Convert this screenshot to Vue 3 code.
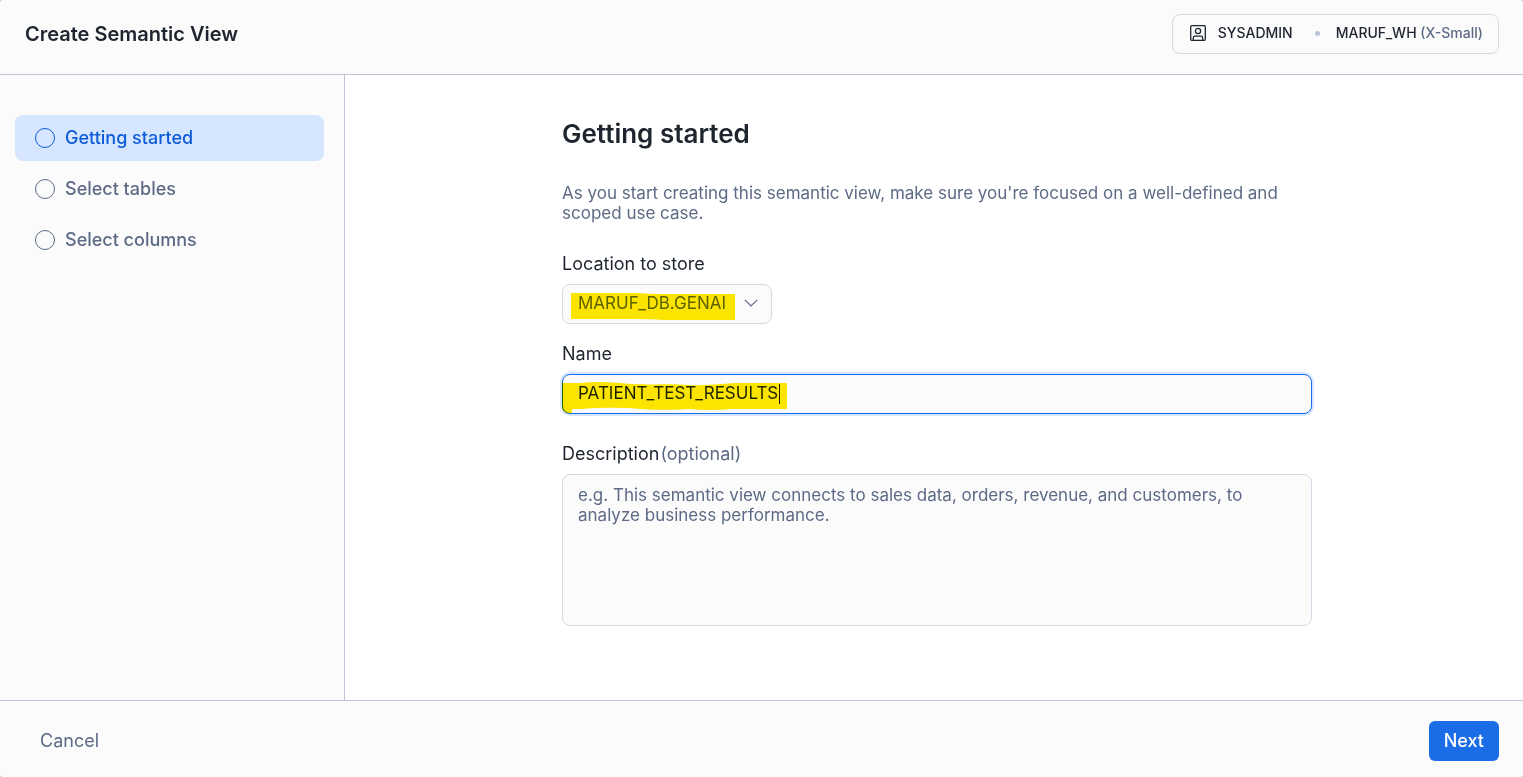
<script setup>
import { nextTick, onMounted, ref, watch } from 'vue'

const steps = ['Getting started', 'Select tables', 'Select columns']
const active = ref(0)
const location = ref('MARUF_DB.GENAI')
const name = ref('PATIENT_TEST_RESULTS')
const description = ref('')
const nameInput = ref(null)
const caretLeft = ref(0)

// Places the steady caret right after the typed text.
function placeCaret() {
  const style = getComputedStyle(nameInput.value)
  const ctx = document.createElement('canvas').getContext('2d')
  ctx.font = `${style.fontWeight} ${style.fontSize} ${style.fontFamily}`
  caretLeft.value = 16 + Math.ceil(ctx.measureText(name.value).width)
}

onMounted(() => {
  const el = nameInput.value
  el.focus()
  el.setSelectionRange(name.value.length, name.value.length)
  placeCaret()
})
watch(name, () => nextTick(placeCaret))
</script>

<template>
  <div class="dialog">
    <header class="header">
      <h1>Create Semantic View</h1>
      <button type="button" class="context">
        <svg class="role-icon" viewBox="0 0 16 16" fill="none" stroke="currentColor" stroke-width="1.3">
          <rect x="0.7" y="0.7" width="14.600" height="14.600" rx="1" />
          <circle cx="8" cy="6" r="2.600" />
          <path d="M3.300 15.200v-2.200a1.800 1.800 0 0 1 1.800-1.800h5.800a1.800 1.800 0 0 1 1.800 1.800v2.200" />
        </svg>
        <span>SYSADMIN</span>
        <span class="dot"></span>
        <span>MARUF_WH <span class="muted">(X-Small)</span></span>
      </button>
    </header>

    <div class="body">
      <nav class="steps">
        <button
          v-for="(step, i) in steps"
          :key="step"
          type="button"
          class="step"
          :class="{ active: i === active }"
          @click="active = i"
        >
          <span class="ring"></span>{{ step }}
        </button>
      </nav>

      <main class="main">
        <form class="form" @submit.prevent>
          <h2>Getting started</h2>
          <p class="intro">
            As you start creating this semantic view, make sure you're focused on a well-defined and scoped use case.
          </p>

          <label for="location">Location to store</label>
          <div class="field select-field">
            <select id="location" v-model="location" class="control">
              <option>MARUF_DB.GENAI</option>
            </select>
            <svg class="chevron" viewBox="0 0 14 8" fill="none" stroke="currentColor" stroke-width="1.2">
              <path d="M0.8 0.8 7 7l6.200-6.200" />
            </svg>
            <svg class="marker" viewBox="0 0 210 40">
              <path d="M9 9H76Q88 10 98 10H173V36H102Q86 35 74 35H9Z" />
            </svg>
          </div>

          <label for="name">Name</label>
          <div class="field name-field">
            <input id="name" ref="nameInput" v-model="name" type="text" class="control" autocomplete="off" spellcheck="false" />
            <span class="caret" :style="{ left: caretLeft + 'px' }"></span>
            <svg class="marker" viewBox="0 0 240 40">
              <path d="M0 9H18Q36 7 58 9C90 12 104 9 126 11C150 12 160 9 182 9H225V35H170Q150 37 126 35C96 37 80 35 66 34Q36 33 20 35H10V39H5Q0 37 0 33Z" />
            </svg>
          </div>

          <label for="description">Description<span class="optional">(optional)</span></label>
          <textarea
            id="description"
            v-model="description"
            class="control"
            placeholder="e.g. This semantic view connects to sales data, orders, revenue, and customers, to analyze business performance."
          ></textarea>
        </form>
      </main>
    </div>

    <footer class="footer">
      <button type="button" class="cancel">Cancel</button>
      <button type="button" class="next">Next</button>
    </footer>
  </div>
</template>

<style>
body {
  margin: 0;
  background: #c4c8d2;
}
</style>

<style scoped>
* {
  box-sizing: border-box;
}
.dialog {
  display: flex;
  flex-direction: column;
  min-height: 100vh;
  overflow: hidden;
  border-radius: 3px;
  background: #fbfbfb;
  color: #1e252f;
  font-family: Inter, "Liberation Sans", sans-serif;
  font-size: 18px;
  line-height: 20px;
}
button,
select,
input,
textarea {
  font: inherit;
  color: inherit;
}
button {
  border: 0;
  background: none;
  cursor: pointer;
}
.header {
  display: flex;
  align-items: center;
  justify-content: space-between;
  padding: 14px 24px 20px 25px;
  border-bottom: 1px solid #bdc4d6;
}
h1 {
  margin: 0;
  font-size: 20px;
  line-height: 24px;
  font-weight: 600;
}
.context {
  display: flex;
  align-items: center;
  height: 40px;
  padding: 0 15px 3px 17px;
  border: 1px solid #d5d9e6;
  border-radius: 8px;
  font-size: 14px;
  font-weight: 500;
}
.role-icon {
  width: 16px;
  height: 16px;
  margin-right: 12px;
}
.dot {
  width: 5px;
  height: 5px;
  margin: 2px 16px 0 22px;
  border-radius: 50%;
  background: #bdc4d9;
}
.muted,
.optional {
  color: #5d6a85;
}
.optional {
  margin-left: 1px;
}
.body {
  display: flex;
  flex: 1;
}
.steps {
  display: flex;
  flex-direction: column;
  gap: 5px;
  width: 345px;
  padding: 40px 20px 40px 15px;
  border-right: 1px solid #bdc4d6;
}
.step {
  display: flex;
  align-items: center;
  gap: 10px;
  height: 46px;
  padding: 0 20px;
  border-radius: 8px;
  color: #5d6a85;
  font-weight: 500;
}
.step.active {
  background: #d6e6ff;
  color: #0c5bd9;
}
.ring {
  width: 20px;
  height: 20px;
  border: 1px solid currentColor;
  border-radius: 50%;
}
.main {
  flex: 1;
  padding: 43px 20px 40px 26px;
  background: #fff;
}
.form {
  display: flex;
  flex-direction: column;
  max-width: 750px;
  margin: 0 auto;
}
h2 {
  margin: 0 0 33px;
  font-size: 26px;
  line-height: 32px;
  font-weight: 600;
}
.intro {
  margin: 0 0 31px;
  color: #5d6a85;
  font-size: 17px;
}
label {
  margin-bottom: 10px;
}
.field {
  position: relative;
  display: flex;
}
.control {
  width: 100%;
  height: 40px;
  padding: 0 15px 2px;
  border: 1px solid #d5d9e6;
  border-radius: 8px;
  outline: none;
  background: #fbfbfb;
  font-size: 17px;
}
.select-field {
  width: 210px;
  margin-bottom: 20px;
}
select.control {
  appearance: none;
  color: #5d6a85;
}
.chevron {
  position: absolute;
  top: 15px;
  right: 14px;
  width: 14px;
  height: 8px;
  color: #5d6a85;
  pointer-events: none;
}
.name-field {
  margin-bottom: 30px;
}
input.control {
  caret-color: transparent;
}
input.control:focus {
  border-color: #1a6ce7;
  box-shadow: 0 0 0 2px #d6e6ff;
}
.caret {
  position: absolute;
  top: 10px;
  width: 1px;
  height: 20px;
  background: #1e252f;
  visibility: hidden;
  pointer-events: none;
}
input:focus + .caret {
  visibility: visible;
}
.marker {
  position: absolute;
  top: 0;
  left: 0;
  height: 40px;
  fill: #ffe900;
  mix-blend-mode: multiply;
  pointer-events: none;
}
textarea.control {
  height: 152px;
  padding: 10px 15px;
  resize: none;
}
textarea::placeholder {
  color: #5d6a85;
  opacity: 1;
}
.footer {
  display: flex;
  align-items: center;
  justify-content: space-between;
  padding: 20px 24px 16px 25px;
  border-top: 1px solid #bdc4d6;
}
.cancel,
.next {
  height: 40px;
  padding: 0 15px;
  border-radius: 6px;
}
.cancel {
  color: #5d6a85;
}
.next {
  background: #1a6ce7;
  color: #fff;
  font-weight: 500;
}
</style>
